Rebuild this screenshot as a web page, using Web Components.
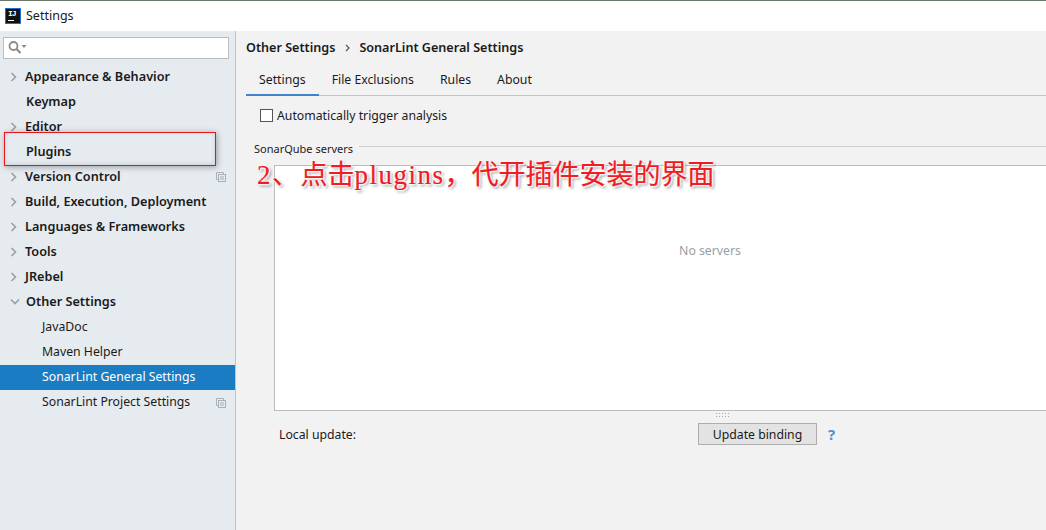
<!DOCTYPE html>
<html>
<head>
<meta charset="utf-8">
<title>Settings</title>
<style>
  html, body { margin: 0; height: 100%; overflow: hidden; }
  body { font-family: "Noto Sans", "Noto Sans CJK SC", sans-serif; font-size: 13px; color: #1a1a1a; }
</style>
</head>
<body>
<settings-window></settings-window>

<script>
const CHEVRON_RIGHT = '<svg width="8" height="10" viewBox="0 0 8 10"><path d="M1.5 1l4 4-4 4" fill="none" stroke="#9a9ea3" stroke-width="1.6"/></svg>';
const CHEVRON_DOWN = '<svg width="10" height="8" viewBox="0 0 10 8"><path d="M1 1.5l4 4 4-4" fill="none" stroke="#9a9ea3" stroke-width="1.6"/></svg>';
const COPY_ICON = '<svg width="10" height="10" viewBox="0 0 10 10" fill="none" stroke="#a9b0b6"><path d="M2.5 7.5h-2v-7h7v2"/><rect x="2.5" y="2.5" width="7" height="7"/><path d="M4 5h4M4 7h4"/></svg>';

class TitleBar extends HTMLElement {
  constructor() {
    super();
    this.attachShadow({ mode: 'open' });
    this.shadowRoot.innerHTML = `
      <style>
        :host {
          display: flex;
          align-items: center;
          gap: 5px;
          box-sizing: border-box;
          height: 31px;
          padding: 0 5px 1px;
          background: #fff;
          border-top: 1px solid #6c7a6c;
          font-size: 12.5px;
        }
        .logo {
          box-sizing: border-box;
          width: 16px;
          height: 16px;
          background: #111;
          border: 1px solid #1d6fd0;
          color: #fff;
          font: bold 8px/9px "Liberation Mono", monospace;
          padding-left: 2px;
          letter-spacing: -1px;
          position: relative;
        }
        .logo i { position: absolute; left: 2px; bottom: 2px; width: 6px; height: 1px; background: #fff; }
      </style>
      <span class="logo">IJ<i></i></span>
      <span>Settings</span>
    `;
  }
}

class SearchBox extends HTMLElement {
  constructor() {
    super();
    this.attachShadow({ mode: 'open' });
    this.shadowRoot.innerHTML = `
      <style>
        :host {
          display: flex;
          align-items: center;
          box-sizing: border-box;
          height: 22px;
          margin: 6px 6px 6px 3px;
          padding-left: 4px;
          background: #fff;
          border: 1px solid #bcbcbc;
        }
      </style>
      <svg width="20" height="16" viewBox="0 0 20 16" fill="none">
        <circle cx="5.5" cy="6" r="4" stroke="#8a8a8a" stroke-width="1.8"/>
        <path d="M8.5 9l4 4" stroke="#8a8a8a" stroke-width="2.2"/>
        <path d="M13.5 5h5l-2.5 3z" fill="#8a8a8a"/>
      </svg>
    `;
  }
}

class TreeRow extends HTMLElement {
  constructor() {
    super();
    this.attachShadow({ mode: 'open' });
  }

  connectedCallback() {
    const arrow = this.getAttribute('arrow');
    const icon = arrow === 'open' ? CHEVRON_DOWN : arrow === 'closed' ? CHEVRON_RIGHT : '';
    this.shadowRoot.innerHTML = `
      <style>
        :host {
          display: flex;
          align-items: center;
          box-sizing: border-box;
          height: 25px;
          padding: 0 9px 4px 10px;
          font-weight: 600;
          font-size: 12.7px;
        }
        :host([child]) { padding: 0 9px 2px 42px; font-weight: 400; font-size: 12.25px; }
        :host([selected]) { background: #1a7dc4; color: #fff; }
        .arrow { width: 16px; flex: none; display: flex; align-items: center; margin-top: 2px; }
        :host([arrow="closed"]) .arrow { width: 15px; }
        :host([child]) .arrow { display: none; }
        .label { flex: 1; white-space: nowrap; }
        .mark { display: flex; margin-top: 2px; }
      </style>
      <span class="arrow">${icon}</span>
      <span class="label"><slot></slot></span>
      ${this.hasAttribute('copy') ? `<span class="mark">${COPY_ICON}</span>` : ''}
    `;
  }
}

class SettingsSidebar extends HTMLElement {
  constructor() {
    super();
    this.attachShadow({ mode: 'open' });
    this.shadowRoot.innerHTML = `
      <style>
        :host {
          display: block;
          box-sizing: border-box;
          width: 236px;
          flex: none;
          background: #e6ebf0;
          border-right: 1px solid #c0c4c8;
        }
      </style>
      <search-box></search-box>
      <slot></slot>
    `;
  }
}

class TabBar extends HTMLElement {
  constructor() {
    super();
    this.attachShadow({ mode: 'open' });
    this.shadowRoot.innerHTML = `
      <style>
        :host {
          display: flex;
          height: 32px;
          box-sizing: border-box;
          margin-left: 10px;
          border-bottom: 1px solid #c4c4c4;
          font-size: 12.25px;
        }
        span { padding: 0 13px; line-height: 32px; white-space: nowrap; }
        .on { border-bottom: 2px solid #4083c9; height: 32px; box-sizing: border-box; }
      </style>
      <span class="on">Settings</span>
      <span>File Exclusions</span>
      <span>Rules</span>
      <span>About</span>
    `;
  }
}

class ServersBox extends HTMLElement {
  constructor() {
    super();
    this.attachShadow({ mode: 'open' });
    this.shadowRoot.innerHTML = `
      <style>
        :host { display: block; font-size: 11px; }
        .head { display: flex; align-items: center; gap: 6px; margin-left: 18px; height: 18px; }
        .head hr { flex: 1; border: 0; border-top: 1px solid #cfcfcf; margin: -3px 0 0; }
        .list {
          box-sizing: border-box;
          width: 872px;
          height: 246px;
          margin: 8px 0 0 38px;
          padding-top: 76px;
          background: #fff;
          border: 1px solid #bdbdbd;
          display: grid;
          place-items: start center;
          color: #9a9ea3;
          font-size: 12.25px;
        }
        .grip { height: 6px; margin: 1px 0 0 479px; width: 16px; background: radial-gradient(circle, #a8a8a8 .6px, transparent .8px) 0 0 / 3px 3px; }
      </style>
      <div class="head"><span>SonarQube servers</span><hr></div>
      <div class="list"><span>No servers</span></div>
      <div class="grip"></div>
    `;
  }
}

class SettingsPanel extends HTMLElement {
  constructor() {
    super();
    this.attachShadow({ mode: 'open' });
    this.shadowRoot.innerHTML = `
      <style>
        :host { display: block; flex: 1; min-width: 0; overflow: hidden; background: #f2f2f2; font-size: 12.25px; }
        .crumbs { display: flex; gap: 8px; height: 32px; padding: 0 0 0 10px; align-items: center; font-weight: 600; font-size: 12.6px; }
        .crumbs svg { margin: 1px 1px 0 2px; }
        .check { display: flex; align-items: center; gap: 4px; height: 39px; margin-left: 24px; }
        .box { box-sizing: border-box; width: 13px; height: 13px; background: #fff; border: 1px solid #555; }
        .update { display: flex; align-items: center; margin: 4px 0 0 43px; height: 24px; }
        .update .name { width: 419px; }
        button {
          font: inherit;
          color: inherit;
          width: 119px;
          height: 22px;
          padding: 0;
          background: #e3e3e3;
          border: 1px solid #adadad;
        }
        .help { margin-left: 11px; color: #4a94cc; font-weight: 700; font-size: 15px; }
      </style>
      <div class="crumbs">
        <span>Other Settings</span>
        <svg width="5" height="8" viewBox="0 0 5 8"><path d="M1 1l3 3-3 3" fill="none" stroke="#555" stroke-width="1.2"/></svg>
        <span>SonarLint General Settings</span>
      </div>
      <tab-bar style="margin-top:1px"></tab-bar>
      <div class="check"><span class="box"></span><span>Automatically trigger analysis</span></div>
      <servers-box style="margin-top:4px"></servers-box>
      <div class="update">
        <span class="name">Local update:</span>
        <button>Update binding</button>
        <span class="help">?</span>
      </div>
    `;
  }
}

class AnnotationLayer extends HTMLElement {
  constructor() {
    super();
    this.attachShadow({ mode: 'open' });
    this.shadowRoot.innerHTML = `
      <style>
        :host { display: block; position: absolute; inset: 0; pointer-events: none; }
        .frame {
          position: absolute;
          left: 4px; top: 132px;
          width: 210px; height: 32px;
          border: 1px solid #e8141c;
          box-shadow: 1px 1px 6px rgba(0,0,0,.35), inset 0 -1px 4px rgba(0,0,0,.12);
        }
        .note {
          position: absolute;
          left: 257px; top: 157px;
          font-family: "Liberation Serif", "Noto Sans CJK SC", serif;
          font-size: 27px;
          line-height: 36px;
          color: #f01c24;
          white-space: nowrap;
          -webkit-text-stroke: 0.2px #f01c24;
          text-shadow: 0 0 2px #fff, 0 0 2px #fff, 0 0 3px #fff, 1px 1px 2px #fff, 2px 2px 3px rgba(0,0,0,.5);
        }
        .note i { font-style: normal; letter-spacing: 1.5px; }
        .note b { font-weight: 400; letter-spacing: 1.5px; }
      </style>
      <div class="frame"></div>
      <div class="note"><i>2、</i>点击<b>plugins</b>，代开插件安装的界面</div>
    `;
  }
}

class SettingsWindow extends HTMLElement {
  constructor() {
    super();
    this.attachShadow({ mode: 'open' });
    this.shadowRoot.innerHTML = `
      <style>
        :host { display: flex; flex-direction: column; position: relative; width: 1046px; height: 530px; overflow: hidden; }
        .body { display: flex; flex: 1; min-height: 0; }
      </style>
      <title-bar></title-bar>
      <div class="body">
        <settings-sidebar>
          <tree-row arrow="closed">Appearance &amp; Behavior</tree-row>
          <tree-row>Keymap</tree-row>
          <tree-row arrow="closed">Editor</tree-row>
          <tree-row>Plugins</tree-row>
          <tree-row arrow="closed" copy>Version Control</tree-row>
          <tree-row arrow="closed">Build, Execution, Deployment</tree-row>
          <tree-row arrow="closed">Languages &amp; Frameworks</tree-row>
          <tree-row arrow="closed">Tools</tree-row>
          <tree-row arrow="closed">JRebel</tree-row>
          <tree-row arrow="open">Other Settings</tree-row>
          <tree-row child>JavaDoc</tree-row>
          <tree-row child>Maven Helper</tree-row>
          <tree-row child selected>SonarLint General Settings</tree-row>
          <tree-row child copy>SonarLint Project Settings</tree-row>
        </settings-sidebar>
        <settings-panel></settings-panel>
      </div>
      <annotation-layer></annotation-layer>
    `;
  }
}

customElements.define('title-bar', TitleBar);
customElements.define('search-box', SearchBox);
customElements.define('tree-row', TreeRow);
customElements.define('settings-sidebar', SettingsSidebar);
customElements.define('tab-bar', TabBar);
customElements.define('servers-box', ServersBox);
customElements.define('settings-panel', SettingsPanel);
customElements.define('annotation-layer', AnnotationLayer);
customElements.define('settings-window', SettingsWindow);
</script>
</body>
</html>
